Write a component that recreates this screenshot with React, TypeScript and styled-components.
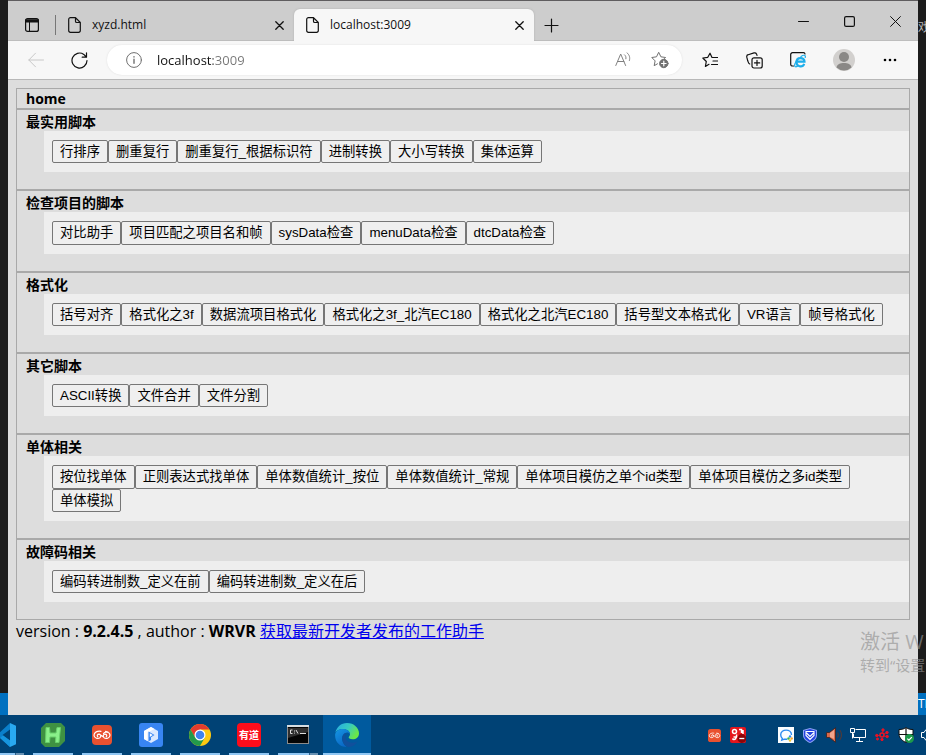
import React from "react";
import styled, { createGlobalStyle, css } from "styled-components";

const latin = '"Open Sans", "Noto Sans CJK SC", sans-serif';

const GlobalStyle = createGlobalStyle`
  *, *::before, *::after { box-sizing: border-box; }
  body { margin: 0; font-family: ${latin}; color: #000; }
  svg { display: block; flex: none; }
`;

/* ---------- desktop ---------- */

const Desktop = styled.div`
  position: relative;
  display: flex;
  flex-direction: column;
  min-height: 100vh;
  overflow: hidden;
  background: #1e1e1e;
`;

const Stage = styled.div`
  flex: 1;
  display: flex;
`;

const EditorEdge = styled.div`
  flex: none;
  width: 8px;
  display: flex;
  flex-direction: column;
  justify-content: space-between;
  overflow: hidden;
  white-space: nowrap;
  background: #1c1c1c;
`;

const EditorText = styled.span`
  padding-top: 19px;
  font-size: 12px;
  line-height: 18px;
  color: #b5b5b5;
`;

const StatusEdge = styled.div`
  margin-top: auto;
  height: 22px;
  font-size: 12px;
  line-height: 22px;
  color: #fff;
  background: #0070c0;
`;

const Watermark = styled.div`
  position: absolute;
  right: 0;
  bottom: 80px;
  width: 66px;
  overflow: hidden;
  white-space: nowrap;
  color: rgba(145, 145, 145, 0.65);
  pointer-events: none;
`;

const WatermarkTitle = styled.div`
  font-size: 20px;
  line-height: 26px;
`;

const WatermarkHint = styled.div`
  font-size: 15px;
  line-height: 20px;
`;

/* ---------- browser window ---------- */

const BrowserWindow = styled.div`
  flex: 1;
  min-width: 0;
  display: flex;
  flex-direction: column;
  border-top: 1px solid #5f5d5f;
  background: #ddd;
`;

const TabStrip = styled.div`
  display: flex;
  height: 40px;
  background: #cdcdcd;
  box-shadow: inset 0 -1px #bdbdbd;
`;

const IconButton = styled.button<{ $width: number; $color?: string }>`
  flex: none;
  width: ${(p) => p.$width}px;
  display: flex;
  align-items: center;
  justify-content: center;
  padding: 0;
  border: 0;
  background: none;
  color: ${(p) => p.$color ?? "#111"};
`;

const Tabs = styled.div`
  display: flex;
  flex: 0 1 478px;
  min-width: 0;
  padding-top: 8px;
`;

const Tab = styled.div<{ $active?: boolean }>`
  display: flex;
  flex: ${(p) => (p.$active ? "1 1 240px" : "1 1 238px")};
  min-width: 0;
  padding: 0 4px 0 12px;
  ${(p) =>
    p.$active &&
    css`
      background: #f7f7f7;
      border-radius: 6px 6px 0 0;
      box-shadow: 0 0 2px #aaa;
      clip-path: inset(-3px -3px 0 -3px);
    `}
`;

const TabButton = styled.button`
  flex: 1;
  min-width: 0;
  display: flex;
  align-items: center;
  gap: 11px;
  padding: 0;
  border: 0;
  background: none;
  font-family: ${latin};
  font-size: 12px;
  line-height: 16px;
  color: #111;
`;

const Divider = styled.span`
  align-self: center;
  width: 1px;
  height: 20px;
  margin-top: 8px;
  background: #777;
`;

const TabTools = styled.div`
  display: flex;
  padding-top: 8px;
`;

const WindowControls = styled.div`
  display: flex;
  margin-left: auto;
`;

const Toolbar = styled.div`
  display: flex;
  align-items: stretch;
  height: 39px;
  padding: 4px 5px 4px 6px;
  background: #f7f7f7;
  border-bottom: 1px solid #b8b8b8;
`;

const AddressBar = styled.div`
  flex: 1;
  min-width: 0;
  display: flex;
  align-items: stretch;
  height: 30px;
  margin: 0 6px;
  padding: 0 4px;
  border-radius: 15px;
  background: #fff;
  box-shadow: 0 0 2px #ddd;
`;

const AddressInput = styled.input`
  flex: 1;
  min-width: 0;
  padding: 0 0 0 1px;
  border: 0;
  outline: 0;
  font-family: ${latin};
  font-size: 13px;
  color: transparent;
  background: linear-gradient(90deg, #111 57px, #767676 57px);
  background-clip: text;
  -webkit-background-clip: text;
`;

/* ---------- page ---------- */

const Page = styled.main`
  flex: 1;
  padding: 8px;
`;

const HomeBar = styled.h1`
  margin: 0;
  padding: 0 9px;
  border: 1px solid #a9a9a9;
  font-size: 14px;
  line-height: 19px;
`;

const Section = styled.section`
  border: 1px solid #a9a9a9;
  padding-bottom: 17px;
`;

const SectionTitle = styled.h2`
  margin: 0;
  padding: 2px 9px 0;
  font-size: 14px;
  line-height: 19px;
`;

const ButtonPanel = styled.div`
  display: flex;
  flex-wrap: wrap;
  margin-left: 27px;
  padding: 9px 8px;
  background: #eee;
`;

const ScriptButton = styled.button`
  padding: 0 7px;
  border: 1px solid #767676;
  border-radius: 2px;
  background: #efefef;
  font-family: "Liberation Sans", "Noto Sans CJK SC", sans-serif;
  line-height: 1.6;
  color: #000;
`;

const Footer = styled.footer`
  font-size: 16px;
  line-height: 22px;
`;

const Link = styled.a`
  color: #00e;
`;

/* ---------- taskbar ---------- */

const Taskbar = styled.footer`
  flex: none;
  display: flex;
  height: 40px;
  background: #004275;
`;

const Apps = styled.div`
  display: flex;
  gap: 1px;
`;

const AppButton = styled.button<{ $active?: boolean; $cut?: boolean; $stacked?: boolean }>`
  width: ${(p) => (p.$cut ? 28 : 48)}px;
  display: flex;
  flex-direction: column;
  align-items: ${(p) => (p.$cut ? "flex-start" : "center")};
  justify-content: space-between;
  padding: 8px 0 0;
  border: 0;
  background: ${(p) => (p.$active ? "#005a9e" : "none")};

  &::after {
    content: "";
    width: ${(p) => (p.$active ? "48px" : p.$cut ? "24px" : "40px")};
    height: 2px;
    background: ${(p) =>
      p.$stacked
        ? "linear-gradient(270deg, #6791b3 8px, #2c5f8a 8px 9px, #8fc6f3 9px)"
        : "#8fc6f3"};
  }
`;

const IconBox = styled.span`
  display: flex;
  align-items: center;
  justify-content: center;
  width: 24px;
  height: 24px;
`;

const RedBadge = styled(IconBox)`
  border-radius: 4px;
  background: #fc0d1b;
  color: #fff;
  font: bold 10px/24px "Noto Sans CJK SC", sans-serif;
`;

const Tray = styled.div`
  display: flex;
  margin-left: auto;
`;

const TraySlot = styled.button<{ $cut?: boolean }>`
  width: ${(p) => (p.$cut ? 8 : 24)}px;
  display: flex;
  align-items: center;
  justify-content: ${(p) => (p.$cut ? "flex-end" : "center")};
  padding: 0;
  border: 0;
  overflow: hidden;
  background: none;
`;

/* ---------- icons ---------- */

type IconProps = { size?: number; children: React.ReactNode; w?: number; sw?: number };

const Line = ({ size = 16, w, sw = 1, children }: IconProps) => (
  <svg
    width={w ?? size}
    height={size}
    viewBox={`0 0 ${w ?? size} ${size}`}
    fill="none"
    stroke="currentColor"
    strokeWidth={sw}
    strokeLinecap="round"
    strokeLinejoin="round"
    aria-hidden="true"
  >
    {children}
  </svg>
);

const FileIcon = () => (
  <Line size={16} w={13} sw={1.2}>
    <path d="M2.5.7h5l4.8 4.8v8a1.7 1.7 0 0 1-1.7 1.8H2.4A1.7 1.7 0 0 1 .7 13.5V2.4A1.7 1.7 0 0 1 2.5.7zM7.5.9v3.3a1.3 1.3 0 0 0 1.3 1.3h3.3" />
  </Line>
);

const CloseIcon = () => (
  <Line size={9} sw={1.3}>
    <path d="M.8.8l7.4 7.4M8.2.8L.8 8.2" />
  </Line>
);

const OrangeMark = ({ size }: { size: number }) => (
  <svg width={size} height={size} viewBox="0 0 20 20" aria-hidden="true">
    <rect width="20" height="20" rx="4" fill="#e9512f" />
    <path
      d="M9 6.300C5.500 5.500 2 7.300 2 10.300c0 3 4.200 4 6 2.300 1.500-1.500.6-3.400-1-3.400s-2.300 1.300-1.300 2.300M7.300 9.200l3.500 2.300M11.500 8.500c1.500-2.300 6.500-1.700 6.500 1.800 0 3-4.200 4-6 2.300-1.500-1.500-.6-3.400 1-3.400s2.300 1.300 1.300 2.300M13.500 6.300l2.500.7"
      fill="none"
      stroke="#fff"
      strokeWidth="1.200"
      strokeLinecap="round"
    />
  </svg>
);

const VsCodeIcon = () => (
  <svg width="16" height="24" viewBox="8 0 16 24" aria-hidden="true">
    <path d="M18 0l6 2.8v18.4L18 24z" fill="#29a9f1" />
    <path d="M18 0v6.5L10.500 12 18 17.500V24L5 12z" fill="#0a7fcb" />
    <path d="M18 17.500V24l-10-9 3-2.600z" fill="#1695df" />
  </svg>
);

const HIcon = () => (
  <svg width="24" height="24" viewBox="0 0 24 24" aria-hidden="true">
    <path d="M5 0h15l4 4v14l-6 6H4l-4-4V5z" fill="#3f9142" />
    <path
      d="M5 4.500h3.500l.5 5.500h6l1-5.500h3.500l-1.500 15H14.500l.3-5.500H9l-.5 5.500H4.500z"
      fill="#8af08a"
      stroke="#68cf6a"
      strokeWidth="1"
      strokeLinejoin="round"
    />
  </svg>
);

const BlueIcon = () => (
  <svg width="24" height="24" viewBox="0 0 24 24" aria-hidden="true">
    <rect width="24" height="24" rx="3" fill="#3885f2" />
    <path d="M12 4l7 4v8l-7 4-7-4V8z" fill="#dbe9ff" />
    <path d="M12 4L5 8v8l3.500 2V9.500L15.500 6z" fill="#fff" />
    <path d="M9.500 8.500l6 3.500-3.500 2.300V17l-2.500 1.400z" fill="#3885f2" />
    <path d="M10.800 10.300l3 1.700-3 2z" fill="#fff" />
  </svg>
);

const ChromeIcon = () => (
  <svg width="24" height="24" viewBox="0 0 24 24" aria-hidden="true">
    <circle cx="12" cy="12" r="11" fill="#fdc912" />
    <path d="M12 6.500h9.500A11 11 0 0 0 2.500 6.500L7.200 15 12 12z" fill="#e33b2e" />
    <path d="M2.500 6.500A11 11 0 0 0 12 23l4.700-8.200L12 12l-4.700 2.800z" fill="#229a4b" />
    <circle cx="12" cy="12" r="5.500" fill="#fff" />
    <circle cx="12" cy="12" r="4.300" fill="#3f83ee" />
  </svg>
);

const ConsoleIcon = () => (
  <svg width="24" height="24" viewBox="0 0 24 24" aria-hidden="true">
    <rect x="1.500" y="2.500" width="21" height="18" fill="#050505" stroke="#8a8a8a" />
    <path d="M1 3h22" stroke="#d5dde2" strokeWidth="2" />
    <path d="M2 5h20v4L2 15z" fill="#303030" />
    <path d="M6.500 7H4.500v3.500h2M8.500 7.500v1M8.500 9.700v.8M10 7l2 3.500M14 10.500h6" fill="none" stroke="#ddd" />
  </svg>
);

const EdgeIcon = () => (
  <svg width="24" height="24" viewBox="0 0 24 24" aria-hidden="true">
    <defs>
      <linearGradient id="edgeTop" x1="0" y1="0" x2="1" y2=".5">
        <stop offset="0" stopColor="#27a8e6" />
        <stop offset=".55" stopColor="#36cbc0" />
        <stop offset="1" stopColor="#6be647" />
      </linearGradient>
      <linearGradient id="edgeLow" x1="0" y1="0" x2=".6" y2="1">
        <stop offset="0" stopColor="#1596e3" />
        <stop offset="1" stopColor="#0a66c4" />
      </linearGradient>
    </defs>
    <path d="M.3 10C1.500 4 6 0 12 0c7 0 12 5 12 10.200 0 4-3 6-6.300 6-3 0-4.200-1.200-4-2 .2-.8 1.300-1.200 1.300-3.200C15 8.500 12 6 8 6 4 6 1 8 .3 10z" fill="url(#edgeTop)" />
    <path d="M.2 11C1 8 4 6 8 6c4 0 7 2.500 7 5-1-1.500-3-2-5-1-4 2-4.500 9 1.500 14C5 24-.6 18.500.2 11z" fill="url(#edgeLow)" />
    <path d="M10.500 10C6 12 6 21 13 23.900c4 .3 7.500-2 9.300-5.400-4 2.300-10 1.500-11.700-3C10 13.500 9.500 11.500 12 10z" fill="#11509c" />
  </svg>
);

/* ---------- data ---------- */

const sections: { title: string; scripts: string[] }[] = [
  { title: "最实用脚本", scripts: ["行排序", "删重复行", "删重复行_根据标识符", "进制转换", "大小写转换", "集体运算"] },
  { title: "检查项目的脚本", scripts: ["对比助手", "项目匹配之项目名和帧", "sysData检查", "menuData检查", "dtcData检查"] },
  {
    title: "格式化",
    scripts: ["括号对齐", "格式化之3f", "数据流项目格式化", "格式化之3f_北汽EC180", "格式化之北汽EC180", "括号型文本格式化", "VR语言", "帧号格式化"],
  },
  { title: "其它脚本", scripts: ["ASCII转换", "文件合并", "文件分割"] },
  {
    title: "单体相关",
    scripts: ["按位找单体", "正则表达式找单体", "单体数值统计_按位", "单体数值统计_常规", "单体项目模仿之单个id类型", "单体项目模仿之多id类型", "单体模拟"],
  },
  { title: "故障码相关", scripts: ["编码转进制数_定义在前", "编码转进制数_定义在后"] },
];

const TitleBar = () => (
  <TabStrip>
    <TabTools>
      <IconButton $width={47} aria-label="Tab actions">
        <Line size={14} w={14}>
          <rect x=".6" y=".6" width="12.8" height="12.8" rx="2" strokeWidth="1.2" />
          <path d="M1 2.200h12M1 3.600h12" strokeWidth="1.8" />
          <path d="M4.500 4v9" />
        </Line>
      </IconButton>
    </TabTools>
    <Divider />
    <Tabs role="tablist">
      <Tab>
        <TabButton role="tab" aria-selected="false">
          <FileIcon />
          xyzd.html
        </TabButton>
        <IconButton $width={22} aria-label="Close xyzd.html"><CloseIcon /></IconButton>
      </Tab>
      <Tab $active>
        <TabButton role="tab" aria-selected="true">
          <FileIcon />
          localhost:3009
        </TabButton>
        <IconButton $width={22} aria-label="Close localhost"><CloseIcon /></IconButton>
      </Tab>
    </Tabs>
    <TabTools>
      <IconButton $width={34} aria-label="New tab">
        <Line size={15} sw={1.2}><path d="M7.500 1v13M1 7.500h13" /></Line>
      </IconButton>
    </TabTools>
    <WindowControls>
      <IconButton $width={46} aria-label="Minimize">
        <Line size={11}><path d="M.5 5.500h10" /></Line>
      </IconButton>
      <IconButton $width={46} aria-label="Maximize">
        <Line size={11} sw={1.2}><rect x=".6" y=".6" width="9.8" height="9.8" rx="1.5" /></Line>
      </IconButton>
      <IconButton $width={46} aria-label="Close window">
        <Line size={11}><path d="M.6.6l9.8 9.8M10.400.6L.6 10.400" /></Line>
      </IconButton>
    </WindowControls>
  </TabStrip>
);

const AddressToolbar = () => (
  <Toolbar>
    <IconButton $width={44} $color="#c8c8c8" aria-label="Back">
      <Line size={16}><path d="M15.500 8H.8M7.500 1.200L.8 8l6.700 6.800" /></Line>
    </IconButton>
    <IconButton $width={43} aria-label="Refresh">
      <Line size={17} sw={1.2}><path d="M16 8.500A7.500 7.500 0 1 1 12.800 2.400L15.300 5M15.500.8V5.200h-4.300" /></Line>
    </IconButton>
    <AddressBar>
      <IconButton $width={45} $color="#707070" aria-label="Site information">
        <Line size={16}>
          <circle cx="8" cy="8" r="7.400" />
          <path d="M8 7.200v4M8 4.600v.4" strokeWidth="1.4" />
        </Line>
      </IconButton>
      <AddressInput aria-label="Address" defaultValue="localhost:3009" />
      <IconButton $width={36} $color="#808080" aria-label="Read aloud">
        <Line size={16}>
          <path d="M.8 13.500L5.700 2l4.900 11.500M2.500 9.500h6.400M9.500 2.800c1.300 1 1.700 2.500 1.400 4M12 .8c2.600 2.200 3.200 4.800 2.400 7.700" />
        </Line>
      </IconButton>
      <IconButton $width={37} $color="#707070" aria-label="Add to favorites">
        <Line size={18}>
          <path d="M6.500 12.800l-3.300 1.900.9-4.800L.8 6.500l4.700-.7L7.700 1.300l2.200 4.500 4.700.7-1.200 1.200" />
          <circle cx="12.800" cy="12.500" r="4.200" fill="currentColor" />
          <path d="M12.800 10.200v4.600M10.500 12.500h4.600" stroke="#fff" strokeWidth="1.2" />
        </Line>
      </IconButton>
    </AddressBar>
    <IconButton $width={44} aria-label="Favorites">
      <Line size={16} sw={1.2}>
        <path d="M15.500 5.500H10L8 1.200 5.800 5.300.8 6l3.500 3.500-.9 4.900L7 12.300M11 9h4.500M9.500 12.500h6" />
      </Line>
    </IconButton>
    <IconButton $width={44} aria-label="Collections">
      <Line size={17} sw={1.2}>
        <rect x="6" y="5.800" width="10.200" height="10.200" rx="2" />
        <path d="M11 8.300v5.200M8.500 10.900h5.200M3.700 12C2.200 11.500 2.200 10 1.600 8.300L.8 5.200c-.3-1.500.3-2.200 1.400-2.500l5.800-1.800c1.200-.3 2 0 2.500 1l.5 1.500" />
      </Line>
    </IconButton>
    <IconButton $width={44} aria-label="Internet Explorer mode">
      <Line size={16}>
        <path d="M3.500 14H2.500A1.800 1.800 0 0 1 .7 12.200V2.500A1.800 1.800 0 0 1 2.500.7h11A1.500 1.500 0 0 1 15 2" strokeWidth="1.2" />
        <path d="M14.200 11.800a4 4 0 0 1-7.700-1.800c0-5.200 8-5.200 8-.4H7.500" stroke="#1daeea" strokeWidth="2.2" strokeLinecap="butt" strokeLinejoin="miter" />
        <path d="M6 9.500c-2 3.500-2 6.500 1.500 4.800M11 4.500c2.500-1.800 5-1.800 4.200 1" stroke="#1daeea" strokeWidth="1.2" />
      </Line>
    </IconButton>
    <IconButton $width={47} aria-label="Profile">
      <svg width="22" height="22" viewBox="0 0 22 22" aria-hidden="true">
        <circle cx="11" cy="11" r="11" fill="#d2d0ce" />
        <circle cx="11" cy="8" r="5" fill="#8a8886" />
        <path d="M3.500 18.500C4 12.600 18 12.600 18.500 18.500A11 11 0 0 1 3.500 18.500z" fill="#8a8886" />
      </svg>
    </IconButton>
    <IconButton $width={46} aria-label="Settings and more">
      <svg width="14" height="4" viewBox="0 0 14 4" aria-hidden="true">
        <circle cx="2" cy="2" r="1.300" /><circle cx="7" cy="2" r="1.300" /><circle cx="12" cy="2" r="1.300" />
      </svg>
    </IconButton>
  </Toolbar>
);

const SystemTray = () => (
  <Tray>
    <TraySlot aria-label="Git client"><OrangeMark size={13} /></TraySlot>
    <TraySlot aria-label="Recorder">
      <svg width="16" height="16" viewBox="0 0 16 16">
        <rect width="16" height="16" rx="2" fill="#e6151c" />
        <g fill="none" stroke="#fff" strokeWidth="1.5">
          <circle cx="4.500" cy="4.500" r="2" />
          <path d="M6.500 7.500c1 4-2.500 6.500-4 4M3.500 10h3M9 2.500h2.500v3.500M13 3v4" />
        </g>
        <circle cx="11.800" cy="11.500" r="4.400" fill="#8c0508" />
        <path d="M9.300 11.500h5" stroke="#fff" strokeWidth="1.3" />
      </svg>
    </TraySlot>
    <TraySlot as="span" />
    <TraySlot aria-label="Chat">
      <svg width="16" height="16" viewBox="0 0 16 16">
        <rect width="16" height="16" fill="#fafdff" />
        <path d="M13.500 8C13.500 1.500 2.700 1.500 2.700 7.800c0 1.700.7 2.800 1.600 3.600L3.800 13l2.500-.9 3 .2" fill="none" stroke="#2a8cf0" strokeWidth="1.4" />
        <circle cx="12" cy="9.500" r="1.200" fill="#2a8cf0" /><circle cx="13.700" cy="11.500" r="1.200" fill="#f5a52c" />
        <circle cx="10.500" cy="11.500" r="1.200" fill="#39b54a" /><circle cx="12" cy="13.500" r="1.200" fill="#f5c52c" />
      </svg>
    </TraySlot>
    <TraySlot aria-label="Shield">
      <svg width="14" height="15" viewBox="0 0 14 15">
        <path d="M7 0l7 2v5c0 4-3.500 6.500-7 8-3.500-1.500-7-4-7-8V2z" fill="#8fa4f5" />
        <path d="M7 1l6 1.800V7c0 3.500-3 5.600-6 7-3-1.400-6-3.500-6-7V2.800z" fill="#2445df" />
        <path d="M3 3.500h8v4L7 11.500 3 7.500zM3.500 5L7 8.500 10.500 5" fill="none" stroke="#fff" strokeWidth="1.1" />
      </svg>
    </TraySlot>
    <TraySlot aria-label="Volume">
      <svg width="16" height="16" viewBox="0 0 16 16">
        <path d="M.5 5.500h3L9.500.7v14.600L3.500 10.500h-3z" fill="#d9694a" stroke="#3a2220" strokeWidth=".8" />
        <path d="M4 6l4-3v9L4 10z" fill="#f0a58c" />
        <path d="M11.500 5.500c1 1.700 1 3.300 0 5M13.800 3c2 3 2 7 0 10" fill="none" stroke="#4b3a3c" strokeWidth="1.2" />
      </svg>
    </TraySlot>
    <TraySlot aria-label="Network">
      <svg width="16" height="14" viewBox="0 0 16 14" fill="none" stroke="#fff">
        <path d="M5.500 1.500h10v8H3.500v-4M9.500 9.500v3.500M6 13.500h7M.5.500h4v4h-4zM2.500 4.500v6" />
      </svg>
    </TraySlot>
    <TraySlot aria-label="Sync">
      <svg width="14" height="14" viewBox="0 0 14 14" fill="#e81224" stroke="#e81224">
        <circle cx="7" cy="7" r="2" fill="none" strokeWidth="1.6" />
        <circle cx="8" cy="2" r="1.200" /><circle cx="12" cy="4.500" r="1.200" /><circle cx="12.200" cy="8.500" r="1.200" />
        <circle cx="1.800" cy="7.500" r="1.200" /><circle cx="2.500" cy="11" r="1" /><circle cx="7" cy="11.500" r="1.200" />
        <path d="M2 7.500h3M9 6l3-1.500M9 8l3 .5M7.500 5l.5-3" strokeWidth=".8" />
      </svg>
    </TraySlot>
    <TraySlot aria-label="Security">
      <svg width="16" height="16" viewBox="0 0 16 16">
        <path d="M8 .5c2 1.500 4 2 7 2V7c0 4-3.500 7-7 8.500C4.500 14 1 11 1 7V2.500c3 0 5-.5 7-2z" fill="#fff" stroke="#111" />
        <path d="M8 1v14M1 7.500h14" stroke="#111" strokeWidth="1.2" />
        <circle cx="11.500" cy="11.500" r="4.500" fill="#1c9a4b" />
        <path d="M9.300 11.600l1.600 1.600 2.900-3" fill="none" stroke="#fff" strokeWidth="1.2" />
      </svg>
    </TraySlot>
    <TraySlot $cut aria-label="Speaker">
      <svg width="5" height="12" viewBox="0 0 5 12" fill="none" stroke="#fff">
        <path d="M5 .5L3 3.500H.5v5H3l2 3" />
      </svg>
    </TraySlot>
  </Tray>
);

export default function App() {
  return (
    <Desktop>
      <GlobalStyle />
      <Stage>
        <EditorEdge><StatusEdge /></EditorEdge>
        <BrowserWindow>
          <TitleBar />
          <AddressToolbar />
          <Page>
            <HomeBar>home</HomeBar>
            {sections.map((s) => (
              <Section key={s.title}>
                <SectionTitle>{s.title}</SectionTitle>
                <ButtonPanel>
                  {s.scripts.map((name) => (
                    <ScriptButton key={name}>{name}</ScriptButton>
                  ))}
                </ButtonPanel>
              </Section>
            ))}
            <Footer>
              version : <b>9.2.4.5</b> , author : <b>WRVR</b> <Link href="#">获取最新开发者发布的工作助手</Link>
            </Footer>
          </Page>
        </BrowserWindow>
        <EditorEdge>
          <EditorText>戏</EditorText>
          <StatusEdge>TI</StatusEdge>
        </EditorEdge>
      </Stage>
      <Taskbar>
        <Apps>
          <AppButton $cut $stacked aria-label="Code editor"><VsCodeIcon /></AppButton>
          <AppButton aria-label="HBuilder"><HIcon /></AppButton>
          <AppButton aria-label="Git client"><IconBox><OrangeMark size={20} /></IconBox></AppButton>
          <AppButton aria-label="Cloud app"><BlueIcon /></AppButton>
          <AppButton aria-label="Chrome"><ChromeIcon /></AppButton>
          <AppButton><RedBadge>有道</RedBadge></AppButton>
          <AppButton $stacked aria-label="Console"><ConsoleIcon /></AppButton>
          <AppButton $active aria-label="Edge"><EdgeIcon /></AppButton>
        </Apps>
        <SystemTray />
      </Taskbar>
      <Watermark aria-hidden="true">
        <WatermarkTitle>激活 W</WatermarkTitle>
        <WatermarkHint>转到“设置</WatermarkHint>
      </Watermark>
    </Desktop>
  );
}
